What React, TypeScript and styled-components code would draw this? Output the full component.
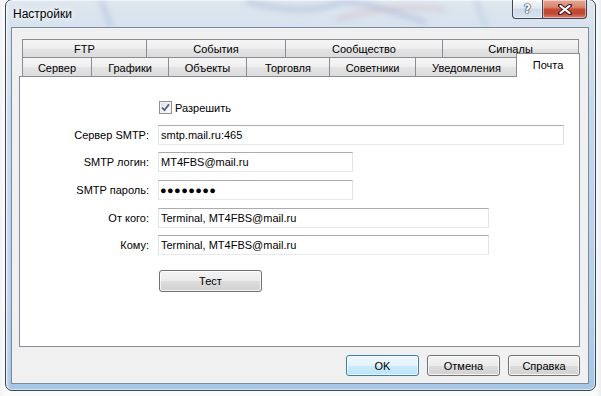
import React from "react";
import styled, { createGlobalStyle } from "styled-components";

const GlobalStyle = createGlobalStyle`
  html, body {
    margin: 0;
    padding: 0;
  }
  body {
    font-family: "Liberation Sans", Arial, sans-serif;
    font-size: 11px;
    color: #000;
  }
`;

const Screen = styled.div`
  width: 601px;
  height: 396px;
  overflow: hidden;
  box-sizing: border-box;
  padding-left: 5px;
  background: linear-gradient(90deg, #f2f3f4 0, #fbfbfb 5px, #fbfbfb 596px, #e9eef4 100%);
`;

const Window = styled.div`
  margin-top: -1px;
  width: 591px;
  height: 392px;
  box-sizing: border-box;
  border: 1px solid #3a4350;
  border-radius: 7px;
  overflow: hidden;
  display: flex;
  flex-direction: column;
  background:
    linear-gradient(90deg, rgba(255, 255, 255, 0.45) 0, rgba(255, 255, 255, 0) 4px),
    linear-gradient(180deg, #dfe7ef 0, #d6e2ee 27px, #c3d8ec 120px, #b5cfe9 300px, #a6c6e6 100%);
  box-shadow: inset 0 0 0 1px rgba(255, 255, 255, 0.6);
`;

const TitleBar = styled.div`
  position: relative;
  height: 27px;
  display: flex;
  align-items: flex-start;
  flex-shrink: 0;
`;

const Haze = styled.svg`
  position: absolute;
  left: 0;
  top: 0;
  pointer-events: none;
`;

const Title = styled.div`
  position: relative;
  padding-left: 7px;
  line-height: 28px;
  font-size: 12px;
  color: #000;
  text-shadow: 0 0 6px #fff, 0 0 10px #fff;
`;

const Caption = styled.div`
  position: relative;
  margin-left: auto;
  margin-right: 8px;
  display: flex;
`;

const CaptionButton = styled.div<{ $close?: boolean }>`
  width: ${(p) => (p.$close ? 44 : 31)}px;
  height: 19px;
  box-sizing: border-box;
  border: 1px solid #3c4654;
  border-top: none;
  ${(p) => (p.$close ? "border-left: none;" : "")}
  border-radius: ${(p) => (p.$close ? "0 0 4px 0" : "0 0 0 4px")};
  display: flex;
  align-items: center;
  justify-content: center;
  box-shadow: inset 0 0 0 1px rgba(255, 255, 255, 0.45);
  background: ${(p) =>
    p.$close
      ? "linear-gradient(180deg, #e6a797 0, #d88571 40%, #c64a34 52%, #c24731 75%, #d9826f 100%)"
      : "linear-gradient(180deg, rgba(255,255,255,0.75) 0, rgba(226,234,243,0.6) 45%, rgba(196,210,226,0.6) 52%, rgba(214,226,240,0.75) 100%)"};
`;

const HelpGlyph = styled.span`
  font-family: "DejaVu Sans", sans-serif;
  font-weight: bold;
  font-size: 12px;
  color: #fff;
  text-shadow: 0 0 1px #2d3845, 0 0 1px #2d3845, 0 0 2px #2d3845;
`;

const Client = styled.div`
  margin: 0 6px 0 5px;
  height: 357px;
  box-sizing: border-box;
  border: 1px solid #7d8a99;
  background: #f0f0f0;
  padding: 11px 8px 0 7px;
  display: flex;
  flex-direction: column;
  flex-shrink: 0;
`;

const TabRow = styled.div<{ $h: number }>`
  display: flex;
  align-items: flex-end;
  height: ${(p) => p.$h}px;
  padding-left: 3px;
`;

const Tab = styled.div<{ $w: number; $last?: boolean }>`
  width: ${(p) => p.$w}px;
  height: 100%;
  box-sizing: border-box;
  border: 1px solid #898c95;
  border-bottom: none;
  ${(p) => (p.$last ? "" : "border-right: none;")}
  background: linear-gradient(180deg, #f6f6f6 0, #eeeeee 50%, #e4e4e4 51%, #dcdcdc 100%);
  display: flex;
  align-items: center;
  justify-content: center;
  white-space: nowrap;
  padding-top: 1px;
`;

const ActiveTab = styled.div<{ $w: number }>`
  position: relative;
  z-index: 2;
  width: ${(p) => p.$w}px;
  height: 24px;
  margin-left: -1px;
  margin-bottom: -1px;
  box-sizing: border-box;
  border: 1px solid #898c95;
  border-bottom: none;
  background: #fff;
  display: flex;
  justify-content: center;
  padding-top: 5px;
  white-space: nowrap;
`;

const Panel = styled.div`
  width: 561px;
  height: 271px;
  box-sizing: border-box;
  border: 1px solid #898c95;
  background: #fff;
  padding-top: 24px;
  display: flex;
  flex-direction: column;
`;

const Row = styled.div<{ $gap: number; $h: number }>`
  display: flex;
  align-items: center;
  margin-top: ${(p) => p.$gap}px;
  height: ${(p) => p.$h}px;
`;

const Label = styled.div`
  width: 129px;
  margin-right: 9px;
  text-align: right;
  white-space: nowrap;
`;

const Field = styled.div<{ $w: number; $secret?: boolean }>`
  width: ${(p) => p.$w}px;
  height: 20px;
  box-sizing: border-box;
  border: 1px solid #dfe3ea;
  border-top-color: #a9abb1;
  border-bottom-color: #e6e9ee;
  background: #fff;
  padding: 0 2px;
  display: flex;
  align-items: center;
  white-space: nowrap;
  ${(p) => (p.$secret ? "font-size: 11px; letter-spacing: 0.4px; padding-left: 1px;" : "")}
`;

const Check = styled.div`
  margin-left: 1px;
  width: 13px;
  height: 13px;
  box-sizing: border-box;
  border: 1px solid #8e8f8f;
  background: linear-gradient(135deg, #dcdcdc 0, #f5f5f5 60%, #ffffff 100%);
  box-shadow: inset 0 0 0 1px #f4f4f4;
  display: flex;
  align-items: center;
  justify-content: center;
`;

const CheckText = styled.span`
  margin-left: 3px;
`;

const Button = styled.div<{ $w: number; $default?: boolean }>`
  width: ${(p) => p.$w}px;
  height: 21px;
  box-sizing: border-box;
  border: 1px solid ${(p) => (p.$default ? "#3c7fb1" : "#707070")};
  border-radius: 3px;
  background: ${(p) =>
    p.$default
      ? "linear-gradient(180deg, #eef8fe 0, #e2f3fd 50%, #cdeafb 51%, #bfe3f8 100%)"
      : "linear-gradient(180deg, #f3f3f3 0, #ebebeb 50%, #dddddd 51%, #d1d1d1 100%)"};
  box-shadow: inset 0 0 0 1px ${(p) => (p.$default ? "rgba(255,255,255,0.7)" : "rgba(255,255,255,0.75)")};
  display: flex;
  align-items: center;
  justify-content: center;
  white-space: nowrap;
`;

const TestButton = styled(Button)`
  margin-left: 1px;
  height: 22px;
`;

const Footer = styled.div`
  width: 561px;
  margin-top: 8px;
  display: flex;
  justify-content: flex-end;
  gap: 8px;
`;

const topTabs = [
  { label: "FTP", w: 124 },
  { label: "События", w: 139 },
  { label: "Сообщество", w: 157 },
  { label: "Сигналы", w: 137 },
];

const bottomTabs = [
  { label: "Сервер", w: 69 },
  { label: "Графики", w: 77 },
  { label: "Объекты", w: 78 },
  { label: "Торговля", w: 83 },
  { label: "Советники", w: 86 },
  { label: "Уведомления", w: 102 },
];

const fields = [
  { label: "Сервер SMTP:", value: "smtp.mail.ru:465", w: 406, gap: 11 },
  { label: "SMTP логин:", value: "MT4FBS@mail.ru", w: 195, gap: 7 },
  { label: "SMTP пароль:", value: "●●●●●●●●", w: 195, gap: 8, secret: true },
  { label: "От кого:", value: "Terminal, MT4FBS@mail.ru", w: 331, gap: 8 },
  { label: "Кому:", value: "Terminal, MT4FBS@mail.ru", w: 331, gap: 7 },
];

export default function App() {
  return (
    <>
      <GlobalStyle />
      <Screen>
        <Window>
          <TitleBar>
            <Haze width="589" height="27" viewBox="0 0 589 27">
              <defs>
                <filter id="blur" x="-20%" y="-50%" width="140%" height="200%">
                  <feGaussianBlur stdDeviation="3" />
                </filter>
              </defs>
              <g filter="url(#blur)" fill="none" strokeWidth="3">
                <path d="M95 0 L105 27" stroke="#8da7c8" opacity="0.6" />
                <path d="M240 2 C270 8 300 14 330 4 C350 -2 380 10 420 22" stroke="#8094c4" opacity="0.55" />
                <path d="M330 20 C360 10 400 4 440 10" stroke="#c99a9a" opacity="0.45" />
                <path d="M470 0 L480 27" stroke="#9cb2cc" opacity="0.5" />
              </g>
            </Haze>
            <Title>Настройки</Title>
            <Caption>
              <CaptionButton>
                <HelpGlyph>?</HelpGlyph>
              </CaptionButton>
              <CaptionButton $close>
                <svg width="14" height="11" viewBox="0 0 14 11">
                  <path d="M2 1.5 L12 9.5 M12 1.5 L2 9.5" stroke="#3b2020" strokeWidth="4" strokeLinecap="round" />
                  <path d="M2.5 2 L11.5 9 M11.5 2 L2.5 9" stroke="#fff" strokeWidth="2.2" strokeLinecap="round" />
                </svg>
              </CaptionButton>
            </Caption>
          </TitleBar>
          <Client>
            <TabRow $h={18}>
              {topTabs.map((t, i) => (
                <Tab key={t.label} $w={t.w} $last={i === topTabs.length - 1}>
                  {t.label}
                </Tab>
              ))}
            </TabRow>
            <TabRow $h={19}>
              {bottomTabs.map((t) => (
                <Tab key={t.label} $w={t.w}>
                  {t.label}
                </Tab>
              ))}
              <ActiveTab $w={64}>Почта</ActiveTab>
            </TabRow>
            <Panel>
              <Row $gap={0} $h={13}>
                <Label />
                <Check>
                  <svg width="9" height="9" viewBox="0 0 9 9">
                    <path d="M1 4.5 L3.5 7.2 L8 1.2" fill="none" stroke="#4a5f8a" strokeWidth="1.8" />
                  </svg>
                </Check>
                <CheckText>Разрешить</CheckText>
              </Row>
              {fields.map((f) => (
                <Row key={f.label} $gap={f.gap} $h={20}>
                  <Label>{f.label}</Label>
                  <Field $w={f.w} $secret={f.secret}>
                    {f.value}
                  </Field>
                </Row>
              ))}
              <Row $gap={15} $h={22}>
                <Label />
                <TestButton $w={103}>Тест</TestButton>
              </Row>
            </Panel>
            <Footer>
              <Button $w={73} $default>
                OK
              </Button>
              <Button $w={73}>Отмена</Button>
              <Button $w={72}>Справка</Button>
            </Footer>
          </Client>
        </Window>
      </Screen>
    </>
  );
}
